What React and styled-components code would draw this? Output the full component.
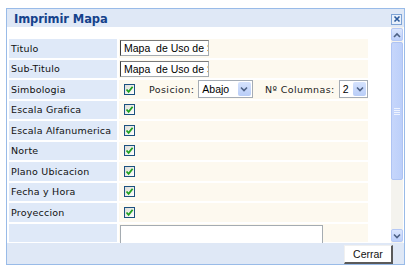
import styled, { createGlobalStyle } from "styled-components";

const GlobalStyle = createGlobalStyle`
  body {
    margin: 0;
    background: #ffffff;
    font-family: "DejaVu Sans", Verdana, sans-serif;
  }
`;

const rows = [
  { label: "Titulo", kind: "text", value: "Mapa  de Uso de Suelo" },
  { label: "Sub-Titulo", kind: "text", value: "Mapa  de Uso de Suelo" },
  { label: "Simbologia", kind: "symbols" },
  { label: "Escala Grafica", kind: "check" },
  { label: "Escala Alfanumerica", kind: "check" },
  { label: "Norte", kind: "check" },
  { label: "Plano Ubicacion", kind: "check" },
  { label: "Fecha y Hora", kind: "check" },
  { label: "Proyeccion", kind: "check" },
];

function CheckBox() {
  return (
    <CheckBoxBox>
      <svg width="9" height="9" viewBox="0 0 9 9">
        <path d="M1.5 4.5 L3.6 6.8 L7.6 1.8" stroke="#21a121" strokeWidth="1.8" fill="none" />
      </svg>
    </CheckBoxBox>
  );
}

function Chevron({ up }) {
  return (
    <svg width="8" height="6" viewBox="0 0 8 6">
      <path
        d={up ? "M1 5 L4 2 L7 5" : "M1 1.5 L4 4.5 L7 1.5"}
        stroke="#4d6185"
        strokeWidth="1.6"
        fill="none"
      />
    </svg>
  );
}

function Select({ value, width }) {
  return (
    <SelectBox $width={width}>
      <SelectText>{value}</SelectText>
      <SelectButton>
        <Chevron />
      </SelectButton>
    </SelectBox>
  );
}

export default function App() {
  return (
    <>
      <GlobalStyle />
      <Dialog>
        <TitleBar>
          <Title>Imprimir Mapa</Title>
          <CloseButton>
            <svg width="8" height="8" viewBox="0 0 8 8">
              <path d="M1.5 1.5 L6.5 6.5 M6.5 1.5 L1.5 6.5" stroke="#2b5a9c" strokeWidth="1.6" />
            </svg>
          </CloseButton>
        </TitleBar>
        <Body>
          <Content>
            <Form>
              {rows.map((row) => (
                <Row key={row.label}>
                  <Label>{row.label}</Label>
                  <Value>
                    {row.kind === "text" && <TextInput readOnly value={row.value} />}
                    {row.kind === "check" && <CheckBox />}
                    {row.kind === "symbols" && (
                      <>
                        <CheckBox />
                        <FieldLabel $left={14}>Posicion:</FieldLabel>
                        <Select value="Abajo" width={58} />
                        <FieldLabel $left={12}>Nº Columnas:</FieldLabel>
                        <Select value="2" width={29} />
                      </>
                    )}
                  </Value>
                </Row>
              ))}
              <Row>
                <Label />
                <Value>
                  <Notes />
                </Value>
              </Row>
            </Form>
          </Content>
          <ScrollBar>
            <ScrollButton>
              <Chevron up />
            </ScrollButton>
            <Thumb>
              <Grip />
            </Thumb>
            <Track />
            <ScrollButton>
              <Chevron />
            </ScrollButton>
          </ScrollBar>
        </Body>
        <Footer>
          <Button>Cerrar</Button>
        </Footer>
      </Dialog>
    </>
  );
}

const Dialog = styled.div`
  margin: 8px 0 0 6px;
  width: 397px;
  height: 255px;
  border: 1px solid #99bbe8;
  display: flex;
  flex-direction: column;
  background: #ffffff;
  overflow: hidden;
`;

const TitleBar = styled.div`
  height: 18px;
  flex: none;
  background: #dfe8f6;
  display: flex;
  align-items: center;
  justify-content: space-between;
  padding: 0 2px 0 7px;
`;

const Title = styled.div`
  font-weight: bold;
  font-size: 11.5px;
  color: #15428b;
  font-family: "DejaVu Sans", Verdana, sans-serif;
  letter-spacing: -0.1px;
  position: relative;
  top: 1px;
`;

const CloseButton = styled.div`
  width: 9px;
  height: 9px;
  border: 1px solid #7ea3d5;
  background: #e8f0fb;
  display: flex;
  align-items: center;
  justify-content: center;
  margin-top: 2px;
`;

const Body = styled.div`
  height: 216px;
  flex: none;
  display: flex;
`;

const Content = styled.div`
  flex: 1;
  padding: 12px 0 0 2px;
  overflow: hidden;
`;

const Form = styled.div`
  display: flex;
  flex-direction: column;
  gap: 2px;
`;

const Row = styled.div`
  display: grid;
  grid-template-columns: 108px 249px;
  column-gap: 2px;
  height: 18.5px;
  flex: none;
`;

const Label = styled.div`
  background: #dfe9f8;
  font-size: 9.5px;
  color: #111;
  display: flex;
  align-items: center;
  padding-left: 2px;
  white-space: nowrap;
  letter-spacing: 0.2px;
`;

const Value = styled.div`
  background: #fdf9ef;
  display: flex;
  align-items: center;
  padding-left: 1px;
  position: relative;
`;

const TextInput = styled.input`
  width: 84px;
  height: 14px;
  box-sizing: content-box;
  margin: 0;
  background: #ffffff;
  border: 1px solid #a5acb2;
  border-left-color: #404040;
  border-top-color: #7a7a7a;
  font-family: "Liberation Sans", Arial, sans-serif;
  font-size: 10.5px;
  color: #000;
  line-height: 14px;
  padding: 0 0 0 3px;
  outline: none;
`;

const CheckBoxBox = styled.div`
  width: 9px;
  height: 9px;
  border: 1px solid #1c5180;
  background: linear-gradient(135deg, #dcdcd7, #ffffff);
  display: flex;
  align-items: center;
  justify-content: center;
  margin-left: 4px;
`;

const FieldLabel = styled.span`
  font-size: 9.5px;
  color: #222;
  margin-left: ${({ $left }) => $left}px;
  margin-right: 4px;
  letter-spacing: 0.4px;
  white-space: nowrap;
`;

const SelectBox = styled.div`
  width: ${({ $width }) => $width}px;
  height: 14px;
  border: 1px solid #a5acb5;
  background: #fff;
  display: flex;
  align-items: center;
  justify-content: space-between;
  padding: 1px;
  box-sizing: content-box;
`;

const SelectText = styled.span`
  font-family: "Liberation Sans", Arial, sans-serif;
  font-size: 10.5px;
  padding-left: 2px;
  color: #000;
`;

const SelectButton = styled.div`
  width: 13px;
  height: 14px;
  background: linear-gradient(#d5e2fd, #b9cdf7);
  border-radius: 2px;
  display: flex;
  align-items: center;
  justify-content: center;
`;

const Notes = styled.div`
  position: absolute;
  left: 1px;
  top: 1px;
  width: 201px;
  height: 40px;
  background: #ffffff;
  border: 1px solid #a5acb2;
`;

const ScrollBar = styled.div`
  width: 12px;
  flex: none;
  margin-right: 1px;
  display: flex;
  flex-direction: column;
  background: #f4f3ee;
`;

const ScrollButton = styled.div`
  height: 11px;
  margin: 1px 0;
  background: linear-gradient(#dbe6fd, #bccffa);
  border: 1px solid #b5c8f5;
  border-radius: 2px;
  display: flex;
  align-items: center;
  justify-content: center;
  flex: none;
`;

const Thumb = styled.div`
  height: 136px;
  flex: none;
  background: linear-gradient(90deg, #c6d6fb, #bccffa);
  border: 1px solid #aec3f3;
  border-radius: 2px;
  display: flex;
  align-items: center;
  justify-content: center;
`;

const Grip = styled.div`
  width: 6px;
  height: 7px;
  background: repeating-linear-gradient(#eef3ff 0 1px, transparent 1px 2px);
`;

const Track = styled.div`
  flex: 1;
`;

const Footer = styled.div`
  flex: 1;
  background: #dfe8f6;
  display: flex;
  justify-content: flex-end;
  align-items: flex-start;
  padding: 2px 11px 0 0;
`;

const Button = styled.div`
  width: 46px;
  height: 16px;
  background: #ffffff;
  border: 1px solid #f0f0f0;
  border-right: 2px solid #5a5a5a;
  border-bottom: 2px solid #5a5a5a;
  font-family: "Liberation Sans", Arial, sans-serif;
  font-size: 10.5px;
  color: #111;
  display: flex;
  align-items: center;
  justify-content: center;
`;
